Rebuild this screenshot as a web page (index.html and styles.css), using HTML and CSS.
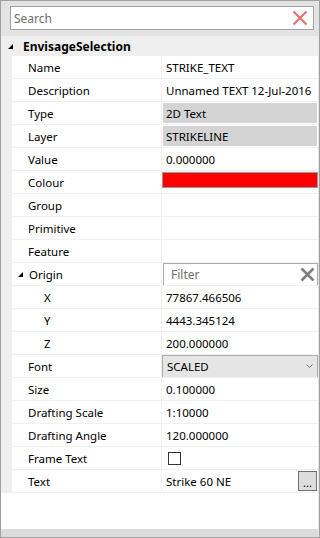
FILE: index.html
```html
<html lang="en">
<head>
	<meta charset="UTF-8">
	<meta name="viewport" content="width=device-width, initial-scale=1.0">
	<title>properties</title>
	<link rel="stylesheet" href="styles.css">
</head>
<body>
	<div class="panel">
		<div class="searchbar">
			<div class="search">
				<span class="hint">Search</span>
				<svg class="clear" width="16" height="16" viewBox="0 0 16 16"><path d="M1.5 1.5 L14.5 14.5 M14.5 1.5 L1.5 14.5" stroke="#e57373" stroke-width="2.2" fill="none"/></svg>
			</div>
		</div>
		<div class="grid">
			<div class="category"><svg class="expander" width="5" height="5" viewBox="0 0 5 5"><polygon points="5,0 5,5 0,5" fill="#000"/></svg>EnvisageSelection</div>
			<div class="rows">
				<div class="row"><div class="name">Name</div><div class="value">STRIKE_TEXT</div></div>
				<div class="row"><div class="name">Description</div><div class="value">Unnamed TEXT 12-Jul-2016</div></div>
				<div class="row"><div class="name">Type</div><div class="value"><div class="readonly">2D Text</div></div></div>
				<div class="row"><div class="name">Layer</div><div class="value"><div class="readonly">STRIKELINE</div></div></div>
				<div class="row"><div class="name">Value</div><div class="value">0.000000</div></div>
				<div class="row"><div class="name">Colour</div><div class="value"><div class="swatch"></div></div></div>
				<div class="row"><div class="name">Group</div><div class="value"></div></div>
				<div class="row"><div class="name">Primitive</div><div class="value"></div></div>
				<div class="row"><div class="name">Feature</div><div class="value"></div></div>
				<div class="row"><div class="name origin"><svg class="expander" width="5" height="5" viewBox="0 0 5 5"><polygon points="5,0 5,5 0,5" fill="#000"/></svg>Origin</div>
					<div class="value"><div class="filter"><span class="hint">Filter</span>
						<svg class="clear" width="15" height="15" viewBox="0 0 15 15"><path d="M1.5 1.5 L13.5 13.5 M13.5 1.5 L1.5 13.5" stroke="#808080" stroke-width="2.6" fill="none"/></svg></div></div></div>
				<div class="row"><div class="name sub">X</div><div class="value">77867.466506</div></div>
				<div class="row"><div class="name sub">Y</div><div class="value">4443.345124</div></div>
				<div class="row"><div class="name sub">Z</div><div class="value">200.000000</div></div>
				<div class="row"><div class="name">Font</div><div class="value"><div class="combo">SCALED
					<svg class="chevron" width="7" height="4" viewBox="0 0 7 4"><path d="M0.5 0.5 L3.5 3.5 L6.5 0.5" stroke="#707070" stroke-width="1" fill="none"/></svg></div></div></div>
				<div class="row"><div class="name">Size</div><div class="value">0.100000</div></div>
				<div class="row"><div class="name">Drafting Scale</div><div class="value">1:10000</div></div>
				<div class="row"><div class="name">Drafting Angle</div><div class="value">120.000000</div></div>
				<div class="row"><div class="name">Frame Text</div><div class="value"><div class="check"></div></div></div>
				<div class="row"><div class="name">Text</div><div class="value text">Strike 60 NE<div class="more">...</div></div></div>
			</div>
			<div class="empty"></div>
			<div class="footer"></div>
		</div>
	</div>
</body>
</html>
```

FILE: styles.css
```css
*{
	margin: 0;
	padding: 0;
	box-sizing: border-box;
}
body{
	font-family: "Noto Sans", "Open Sans", sans-serif;
	font-size: 11.5px;
	color: #000;
	background: #fff;
}
.panel{
	width: 320px;
	height: 538px;
	border: 1px solid #a0a0a0;
	display: flex;
	flex-direction: column;
}
.searchbar{
	height: 35px;
	background-color: #e3e3e3;
	padding: 5px 5px 0 9px;
}
.search{
	height: 24px;
	background: #fff;
	border: 1px solid #a3a3a3;
	display: flex;
	align-items: center;
	padding-left: 3px;
	font-size: 12px;
}
.hint{
	color: #6d6d6d;
	flex: 1;
}
.search .clear{
	margin-right: 5px;
}
.grid{
	flex: 1;
	display: flex;
	flex-direction: column;
	background: #fff;
	border-right: 1px solid #e6e6e6;
}
.category{
	height: 20px;
	background-color: #efefef;
	font-weight: bold;
	font-size: 12px;
	display: flex;
	align-items: center;
	padding-left: 7px;
}
.category .expander{
	margin-right: 10px;
}
.rows{
	border-left: 11px solid #efefef;
}
.row{
	height: 23px;
	display: flex;
	border-bottom: 1px solid #f0f0f0;
}
.name{
	width: 150px;
	border-right: 1px solid #f0f0f0;
	padding-left: 16px;
	display: flex;
	align-items: center;
}
.name.sub{
	padding-left: 32px;
}
.name.origin{
	padding-left: 6px;
}
.name.origin .expander{
	margin-right: 6px;
}
.value{
	flex: 1;
	display: flex;
	align-items: center;
	padding-left: 4px;
	white-space: nowrap;
	overflow: hidden;
}
.readonly{
	background-color: #d4d4d4;
	height: 20px;
	flex: 1;
	margin: 0 1px 0 -3px;
	padding-left: 3px;
	display: flex;
	align-items: center;
}
.swatch{
	height: 16px;
	flex: 1;
	margin: -4px 0 0 -4px;
	background-color: #ff0000;
	border: 1px solid #9a9a9a;
}
.filter{
	height: 23px;
	flex: 1;
	margin: 0 0 0 -3px;
	border: 1px solid #ababab;
	display: flex;
	align-items: center;
	padding-left: 7px;
	font-size: 12px;
}
.filter .clear{
	margin-right: 2px;
}
.combo{
	height: 23px;
	flex: 1;
	margin: 0 0 0 -4px;
	background-color: #e5e5e5;
	border: 1px solid #acacac;
	display: flex;
	align-items: center;
	justify-content: space-between;
	padding: 0 4px 0 4px;
}
.check{
	width: 13px;
	height: 13px;
	border: 1px solid #333;
	margin-left: 2px;
	background: #fff;
}
.value.text{
	justify-content: space-between;
}
.more{
	width: 19px;
	height: 20px;
	background-color: #dddddd;
	border: 1px solid #707070;
	font-size: 11px;
	line-height: 22px;
	text-align: center;
	margin-right: 1px;
}
.empty{
	flex: 1;
}
.footer{
	height: 8px;
	background-color: #dcdcdc;
}
```
